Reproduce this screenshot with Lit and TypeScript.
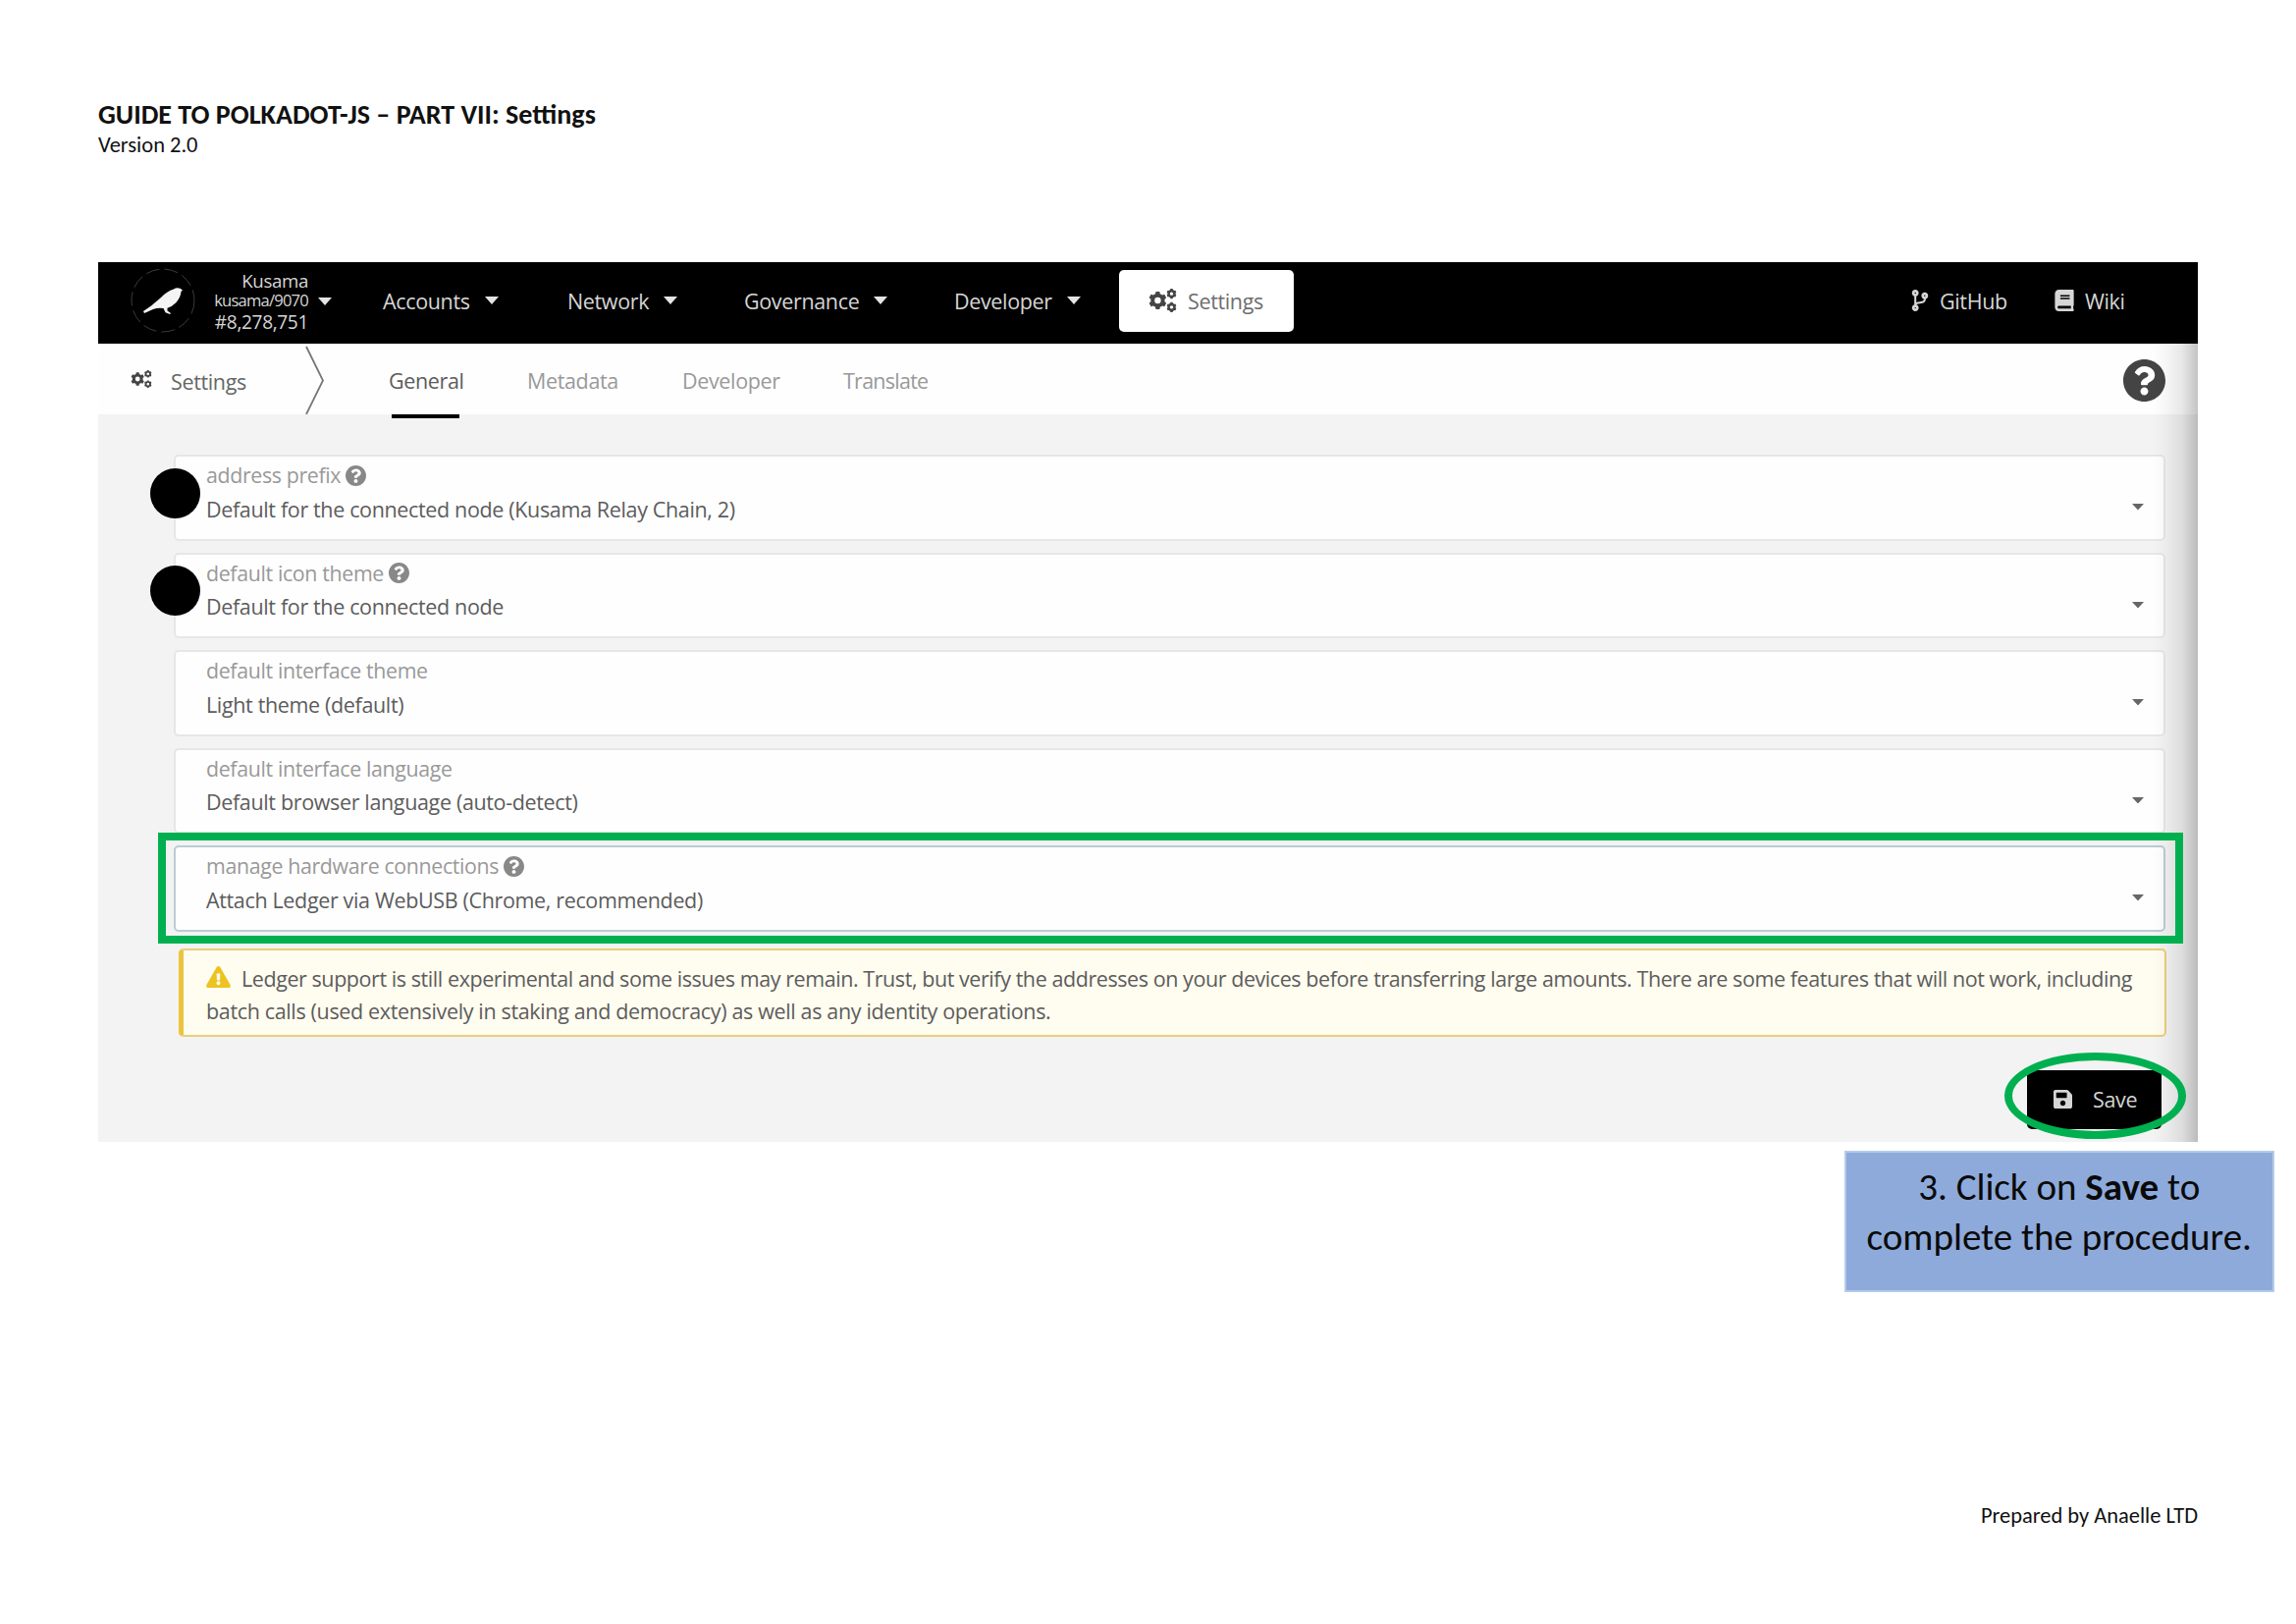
import { LitElement, html, css, svg, nothing } from 'lit';
import { customElement, property } from 'lit/decorators.js';
import { classMap } from 'lit/directives/class-map.js';

const HELP = 'M504 256c0 136.997-111.043 248-248 248S8 392.997 8 256C8 119.083 119.043 8 256 8s248 111.083 248 248zM262.655 90c-54.497 0-89.255 22.957-116.549 63.758-3.536 5.286-2.353 12.415 2.715 16.258l34.699 26.31c5.205 3.947 12.621 3.008 16.665-2.122 17.864-22.658 30.113-35.797 57.303-35.797 20.429 0 45.698 13.148 45.698 32.958 0 14.976-12.363 22.667-32.534 33.976C247.128 238.528 216 254.941 216 296v4c0 6.627 5.373 12 12 12h56c6.627 0 12-5.373 12-12v-1.333c0-28.462 83.186-29.647 83.186-106.667 0-58.002-60.165-102-116.531-102zM256 338c-25.365 0-46 20.635-46 46 0 25.364 20.635 46 46 46s46-20.636 46-46c0-25.365-20.635-46-46-46z';
const BRANCH = 'M384 144c0-44.200-35.800-80-80-80s-80 35.800-80 80c0 36.400 24.300 67.100 57.500 76.800-.6 16.100-4.200 28.500-11 36.900-15.400 19.200-49.300 22.400-85.200 25.700-28.200 2.600-57.400 5.400-81.300 16.900v-144c32.500-10.200 56-40.500 56-76.300 0-44.200-35.800-80-80-80S0 35.800 0 80c0 35.800 23.500 66.100 56 76.300v199.300C23.500 365.900 0 396.200 0 432c0 44.200 35.800 80 80 80s80-35.800 80-80c0-34-21.200-63.100-51.200-74.600 3.100-5.200 7.800-9.800 14.900-13.400 16.200-8.200 40.400-10.400 66.100-12.800 42.200-3.900 90-8.400 118.200-43.400 14-17.400 21.100-39.800 21.600-67.900 31.600-10.800 54.400-40.700 54.400-75.900zM80 64c8.800 0 16 7.200 16 16s-7.200 16-16 16-16-7.200-16-16 7.200-16 16-16zm0 384c-8.800 0-16-7.200-16-16s7.200-16 16-16 16 7.200 16 16-7.200 16-16 16zm224-320c8.800 0 16 7.200 16 16s-7.200 16-16 16-16-7.200-16-16 7.200-16 16-16z';
const BOOK = 'M448 360V24c0-13.300-10.700-24-24-24H96C43 0 0 43 0 96v320c0 53 43 96 96 96h328c13.300 0 24-10.700 24-24v-16c0-7.500-3.500-14.300-8.900-18.700-4.200-15.400-4.200-59.300 0-74.700 5.400-4.300 8.900-11.100 8.900-18.600zM128 134c0-3.300 2.700-6 6-6h212c3.300 0 6 2.700 6 6v20c0 3.300-2.700 6-6 6H134c-3.300 0-6-2.700-6-6v-20zm0 64c0-3.300 2.700-6 6-6h212c3.300 0 6 2.700 6 6v20c0 3.300-2.700 6-6 6H134c-3.300 0-6-2.700-6-6v-20zm253.400 250H96c-17.700 0-32-14.300-32-32 0-17.600 14.400-32 32-32h285.400c-1.900 17.100-1.900 46.900 0 64z';
const SAVE = 'M433.941 129.941l-83.882-83.882A48 48 0 0 0 316.118 32H48C21.490 32 0 53.490 0 80v352c0 26.510 21.490 48 48 48h352c26.510 0 48-21.490 48-48V163.882a48 48 0 0 0-14.059-33.941zM224 416c-35.346 0-64-28.654-64-64 0-35.346 28.654-64 64-64s64 28.654 64 64c0 35.346-28.654 64-64 64zm96-304.520V212c0 6.627-5.373 12-12 12H76c-6.627 0-12-5.373-12-12V108c0-6.627 5.373-12 12-12h228.520c3.183 0 6.235 1.264 8.485 3.515l3.480 3.480A11.996 11.996 0 0 1 320 111.480z';
const WARN = 'M569.517 440.013C587.975 472.007 564.806 512 527.940 512H48.054c-36.937 0-59.999-40.055-41.577-71.987L246.423 23.985c18.467-32.009 64.720-31.951 83.154 0l239.940 416.028zM288 354c-25.405 0-46 20.595-46 46s20.595 46 46 46 46-20.595 46-46-20.595-46-46-46zm-43.673-165.346l7.418 136c.347 6.364 5.609 11.346 11.982 11.346h48.546c6.373 0 11.635-4.982 11.982-11.346l7.418-136c.375-6.874-5.098-12.654-11.982-12.654h-63.383c-6.884 0-12.356 5.780-11.981 12.654z';

/** Outline of a toothed wheel with a round hole, centred on (cx, cy). */
function wheel(cx: number, cy: number, teeth: number, outer: number, inner: number, hole: number): string {
  const pts: string[] = [];
  const step = (Math.PI * 2) / teeth;
  for (let i = 0; i < teeth; i++) {
    const a = i * step - Math.PI / 2;
    for (const [r, o] of [[inner, -0.32], [outer, -0.2], [outer, 0.2], [inner, 0.32]]) {
      pts.push(`${(cx + r * Math.cos(a + o * step)).toFixed(1)} ${(cy + r * Math.sin(a + o * step)).toFixed(1)}`);
    }
  }
  return `M${pts.join('L')}ZM${cx - hole} ${cy}a${hole} ${hole} 0 1 0 ${2 * hole} 0a${hole} ${hole} 0 1 0 ${-2 * hole} 0Z`;
}

const COGS = wheel(208, 256, 6, 212, 166, 74) + wheel(532, 98, 6, 118, 98, 40) + wheel(532, 414, 6, 118, 98, 40);

const ICONS: Record<string, { box: string; d: string }> = {
  help: { box: '8 8 496 496', d: HELP },
  branch: { box: '0 0 384 512', d: BRANCH },
  book: { box: '0 0 448 512', d: BOOK },
  save: { box: '0 32 448 448', d: SAVE },
  warn: { box: '0 0 576 512', d: WARN },
  cogs: { box: '0 -20 650 552', d: COGS },
};

const icon = (name: string, cls: string) => html`<svg class="icon ${cls}" viewBox=${ICONS[name].box}>
  ${svg`<path fill="currentColor" fill-rule="evenodd" d=${ICONS[name].d}></path>`}
</svg>`;

const shared = css`
  * { box-sizing: border-box; }
  .icon { display: block; flex: none; }
`;

@customElement('setting-field')
class SettingField extends LitElement {
  @property() label = '';
  @property() value = '';
  @property({ type: Boolean }) help = false;
  @property({ type: Boolean }) active = false;

  static styles = [shared, css`
    :host { display: block; }
    .card {
      display: flex; justify-content: space-between; height: 87.5px; padding: 2px 20.500px 0 31px;
      background: #fefefe; border: 2px solid #e7e6e6; border-radius: 5px;
    }
    .active { border-color: #b9ccd4; }
    .label, .value { line-height: 34.500px; white-space: nowrap; }
    .label { display: flex; align-items: center; font-size: 21.350px; color: #999; }
    .value { color: #5c5c5c; }
    .help { width: 21px; height: 21px; margin: 0 0 1px 5px; color: #888; }
    .caret { align-self: flex-start; margin-top: 46px; width: 12px; height: 6.500px; }
  `];

  render() {
    return html`<div class=${classMap({ card: true, active: this.active })}>
      <div>
        <div class="label">${this.label}${this.help ? icon('help', 'help') : nothing}</div>
        <div class="value">${this.value}</div>
      </div>
      <svg class="icon caret" viewBox="0 0 12 6.5"><path fill="#666" d="M0 0H12L6 6.500Z"></path></svg>
    </div>`;
  }
}

const FIELDS = [
  { label: 'address prefix', value: 'Default for the connected node (Kusama Relay Chain, 2)', help: true },
  { label: 'default icon theme', value: 'Default for the connected node', help: true },
  { label: 'default interface theme', value: 'Light theme (default)' },
  { label: 'default interface language', value: 'Default browser language (auto-detect)' },
  { label: 'manage hardware connections', value: 'Attach Ledger via WebUSB (Chrome, recommended)', help: true, active: true },
];

@customElement('app-root')
class AppRoot extends LitElement {
  static styles = [shared, css`
    :host { display: block; }
    .page {
      display: flex; flex-direction: column; width: 2339px; height: 1654px; padding: 99px 100px 0;
      background: #fff; color: #111; font-family: Carlito, Calibri, Lato, sans-serif; overflow: hidden;
    }
    .title { margin: 0; font-size: 28.050px; line-height: 36px; font-weight: 700; }
    .version { font-size: 22.500px; line-height: 25px; }
    .shot {
      position: relative; margin-top: 107.300px; height: 895.500px; background: #f3f3f3; color: #5c5c5c;
      font-family: "Open Sans", "Noto Sans", sans-serif; font-size: 21.500px; letter-spacing: -0.350px;
    }
    .bar {
      display: grid; align-items: center; height: 83px; background: #000; color: #d6d6d6; white-space: nowrap;
      grid-template-columns: 33px 66px 115px 76px 188px 180px 214px 168px 178px 629px 146px auto;
    }
    .bar > :first-child { grid-column: 2; }
    .logo { width: 66px; height: 66px; margin-top: -5px; }
    .chain { display: flex; align-items: center; justify-content: flex-end; text-align: right; }
    .chain-name { font-size: 18.700px; line-height: 21px; }
    .chain-spec { font-size: 16.600px; line-height: 19px; letter-spacing: -0.800px; }
    .chain-block { font-size: 19.100px; line-height: 27px; }
    .down { width: 14px; height: 8px; margin-left: 15px; }
    .down-chain { margin: 2px 0 0 10px; }
    .item { display: flex; align-items: center; padding-bottom: 5px; }
    .button {
      display: flex; align-items: center; height: 63.500px; margin-bottom: 5px; padding-left: 30px;
      background: #fff; border-radius: 5px; color: #6e6e6e; gap: 11px;
    }
    .cogs { width: 29px; height: 24px; color: #444; }
    .branch { width: 18px; height: 22px; margin-right: 11px; }
    .book { width: 20px; height: 22px; margin-right: 11px; }
    .tabs {
      display: grid; align-items: center; height: 72px; padding-top: 4px; background: #fefefe; white-space: nowrap; color: #999;
      grid-template-columns: 33px 41px 137px 85px 141px 158px 164px 1304px auto;
    }
    .tabs > :first-child { grid-column: 2; }
    .cogs-small { width: 22px; height: 18px; color: #444; margin-bottom: 4px; }
    .crumb { color: #666; }
    .chevron { width: 19px; height: 71px; margin-top: -3px; }
    .tab { line-height: 68px; }
    .narrow { letter-spacing: -0.750px; }
    .current { color: #5c5c5c; display: flex; flex-direction: column; align-items: flex-start; height: 68px; }
    .current::after { content: ""; width: 69px; height: 4px; margin-left: 3px; flex: none; background: #000; }
    .help-big { width: 43px; height: 43px; color: #444; margin-bottom: 1px; }
    .fields { display: flex; flex-direction: column; gap: 12px; padding: 41px 33px 0 77px; }
    .notice {
      height: 90.500px; margin: 17px 32px 0 82px; padding: 12.500px 0 0 23px; line-height: 33px;
      background: #fffcf0; border: 2px solid #e9cf78; border-left: 5px solid #ecc33c; border-radius: 5px;
    }
    .notice-line { display: flex; align-items: center; white-space: nowrap; }
    .tight { letter-spacing: -0.430px; }
    .warn { width: 25px; height: 22px; margin: -3px 11px 0 0; color: #ecc320; }
    .actions { display: flex; justify-content: flex-end; padding: 33.500px 37px 0 0; }
    .save {
      display: flex; align-items: center; width: 137px; height: 60px; padding: 0 0 0 27px; gap: 21px;
      background: #000; color: #d6d6d6; border-radius: 5px;
    }
    .save-icon { width: 19px; height: 19px; }
    .edge {
      position: absolute; right: 0; top: 83px; bottom: 0; width: 46px;
      background: linear-gradient(to right, rgba(0,0,0,0), rgba(0,0,0,0.030) 30%, rgba(0,0,0,0.090) 65%, rgba(0,0,0,0.230));
    }
    .dot { position: absolute; left: 53px; width: 50.500px; height: 51px; border-radius: 50%; background: #000; }
    .dot-a { top: 209.500px; }
    .dot-b { top: 308.500px; }
    .frame { position: absolute; left: 61px; top: 581px; width: 2063px; height: 113px; border: 8px solid #00b050; }
    .ring { position: absolute; left: 1942px; top: 805px; width: 185px; height: 87.500px; border: 8px solid #00b050; border-radius: 50%; }
    .callout {
      align-self: flex-end; margin: 9.500px -78px 0 0; width: 438.500px; height: 144px; padding-top: 8.500px;
      background: #8eaadb; border: 2px solid #b4cbea; color: #0a0a0a; text-align: center;
      font-size: 39px; line-height: 51.500px; white-space: nowrap;
    }
    .footer { margin-top: 214px; text-align: right; font-size: 22.450px; line-height: 28px; }
  `];

  private down(cls = '') {
    return html`<svg class="icon down ${cls}" viewBox="0 0 14 8"><path fill="#e4e4e4" d="M0 0H14L7 8Z"></path></svg>`;
  }

  render() {
    return html`<div class="page">
      <h1 class="title">GUIDE TO POLKADOT-JS – PART VII: Settings</h1>
      <div class="version">Version 2.0</div>

      <section class="shot">
        <header class="bar">
          <svg class="icon logo" viewBox="0 0 66 66">
            <circle cx="33" cy="33" r="32" fill="#000" stroke="#3c3c3c" stroke-width="1" stroke-dasharray="14 5"></circle>
            <path fill="#f4f4f4" d="M13 44L21 38.500L31 30Q37 23.500 44 21.500Q47 19.500 50.500 20.800L53 22.500L51.500 24Q51 30 46 35.500Q42 39.500 37.500 40.800L37.500 43.500L41 46L40.200 47L35.500 45.200L33.500 41Q28 40.200 23 42L14 46Z"></path>
          </svg>
          <div class="chain">
            <div>
              <div class="chain-name">Kusama</div>
              <div class="chain-spec">kusama/9070</div>
              <div class="chain-block">#8,278,751</div>
            </div>
          </div>
          <div class="item">${this.down('down-chain')}</div>
          ${['Accounts', 'Network', 'Governance', 'Developer'].map((t) => html`<div class="item">${t}${this.down()}</div>`)}
          <div class="button">${icon('cogs', 'cogs')}<span>Settings</span></div>
          <div class="item"></div>
          <div class="item">${icon('branch', 'branch')}GitHub</div>
          <div class="item">${icon('book', 'book')}Wiki</div>
        </header>

        <nav class="tabs">
          ${icon('cogs', 'cogs-small')}
          <span class="crumb">Settings</span>
          <svg class="icon chevron" viewBox="0 0 19 71"><path fill="none" stroke="#777" stroke-width="1.800" d="M1 2L18 36.500L1 71"></path></svg>
          <span class="tab current">General</span>
          <span class="tab">Metadata</span>
          <span class="tab">Developer</span>
          <span class="tab narrow">Translate</span>
          ${icon('help', 'help-big')}
        </nav>

        <div class="fields">
          ${FIELDS.map((f) => html`<setting-field .label=${f.label} .value=${f.value} .help=${!!f.help} .active=${!!f.active}></setting-field>`)}
        </div>

        <div class="notice">
          <div class="notice-line tight">${icon('warn', 'warn')}Ledger support is still experimental and some issues may remain. Trust, but verify the addresses on your devices before transferring large amounts. There are some features that will not work, including</div>
          <div class="notice-line">batch calls (used extensively in staking and democracy) as well as any identity operations.</div>
        </div>

        <div class="actions">
          <div class="save">${icon('save', 'save-icon')}<span>Save</span></div>
        </div>

        <div class="edge"></div>
        <div class="dot dot-a"></div>
        <div class="dot dot-b"></div>
        <div class="frame"></div>
        <div class="ring"></div>
      </section>

      <aside class="callout">3. Click on <b>Save</b> to<br>complete the procedure.</aside>
      <footer class="footer">Prepared by Anaelle LTD</footer>
    </div>`;
  }
}
